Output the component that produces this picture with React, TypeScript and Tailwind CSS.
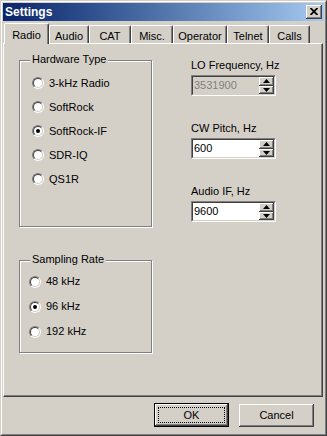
import { ReactNode } from 'react';

const FACE = 'bg-[#d4d0c8]';

const tabs = [
    { label: 'Radio', w: 'w-[45px]' },
    { label: 'Audio', w: 'w-[40px]' },
    { label: 'CAT', w: 'w-[42px]' },
    { label: 'Misc.', w: 'w-[42px]' },
    { label: 'Operator', w: 'w-[54px]' },
    { label: 'Telnet', w: 'w-[42px]' },
    { label: 'Calls', w: 'w-[41px]' },
];

const Radio = ({ checked }: { checked?: boolean }) => (
    <span className="flex h-[12px] w-[12px] shrink-0 rounded-full border border-t-[#808080] border-l-[#808080] border-r-white border-b-white">
        <span className="flex h-full w-full items-center justify-center rounded-full border border-t-[#404040] border-l-[#404040] border-r-[#d4d0c8] border-b-[#d4d0c8] bg-white">
            {checked && <span className="h-[4px] w-[4px] rounded-full bg-black" />}
        </span>
    </span>
);

const GroupBox = ({ title, className, children }: { title: string; className: string; children: ReactNode }) => (
    <div className={`relative border border-[#808080] shadow-[inset_1px_1px_0_white,1px_1px_0_white] ${className}`}>
        {/* caption sits over the etched line */}
        <span className={`absolute -top-[8px] left-[10px] px-[2px] leading-[13px] ${FACE}`}>{title}</span>
        {children}
    </div>
);

const Arrow = ({ up }: { up?: boolean }) => (
    <svg width="7" height="4" viewBox="0 0 7 4">
        {up ? <path d="M3.5 0 L7 4 L0 4 Z" fill="#000" /> : <path d="M0 0 L7 0 L3.5 4 Z" fill="#000" />}
    </svg>
);

const SpinHalf = ({ up }: { up?: boolean }) => (
    <div className={`flex flex-1 items-center justify-center ${FACE} shadow-[inset_-1px_-1px_0_#404040,inset_1px_1px_0_white,inset_-2px_-2px_0_#808080]`}>
        <Arrow up={up} />
    </div>
);

const SpinField = ({ label, value, disabled }: { label: string; value: string; disabled?: boolean }) => (
    <div className="flex flex-col">
        <span className="leading-[13px]">{label}</span>
        <div className="mt-[3px] flex h-[21px] w-[85px] border border-t-[#808080] border-l-[#808080] border-r-white border-b-white">
            <div className={`flex flex-1 border border-t-[#404040] border-l-[#404040] border-r-[#d4d0c8] border-b-[#d4d0c8] ${disabled ? FACE : 'bg-white'}`}>
                <span className={`flex-1 pl-[1px] leading-[17px] ${disabled ? 'text-[#808080]' : 'text-black'}`}>{value}</span>
                <div className="flex w-[15px] flex-col">
                    <SpinHalf up />
                    <SpinHalf />
                </div>
            </div>
        </div>
    </div>
);

export default function App() {
    return (
        <div
            className={`h-[436px] w-[327px] border border-t-[#d4d0c8] border-l-[#d4d0c8] border-r-[#404040] border-b-[#404040] ${FACE} text-[11px] text-black`}
            style={{ fontFamily: '"Liberation Sans", Arial, sans-serif' }}
        >
            <div className="flex h-full flex-col border border-t-white border-l-white border-r-[#808080] border-b-[#808080] p-[1px]">
                {/* Title bar */}
                <div className="flex h-[18px] items-center justify-between bg-gradient-to-r from-[#0a246a] to-[#a6caf0] pl-[2px] pr-[2px]">
                    <span className="text-[12px] font-bold text-white">Settings</span>
                    <div className={`flex h-[14px] w-[16px] items-center justify-center ${FACE} shadow-[inset_-1px_-1px_0_#404040,inset_1px_1px_0_white,inset_-2px_-2px_0_#808080]`}>
                        <svg width="8" height="7" viewBox="0 0 8 7" className="-mt-[1px]">
                            <path d="M0.5 0 L7.5 7 M7.5 0 L0.5 7" stroke="#000" strokeWidth="1.8" />
                        </svg>
                    </div>
                </div>

                {/* Tabs */}
                <div className="mt-[1px] flex h-[21px] items-end pl-[1px]">
                    {tabs.map((t, i) =>
                        i === 0 ? (
                            <div
                                key={t.label}
                                className={`relative z-10 -mb-[1px] flex h-[21px] ${t.w} items-start justify-center rounded-t-[2px] border-l border-t border-l-white border-t-white border-r border-r-[#404040] shadow-[inset_-1px_0_0_#808080] ${FACE} pt-[3px]`}
                            >
                                {t.label}
                            </div>
                        ) : (
                            <div
                                key={t.label}
                                className={`flex h-[18px] ${t.w} items-start justify-center rounded-t-[2px] border-l border-t border-l-white border-t-white border-r border-r-[#404040] shadow-[inset_-1px_0_0_#808080] pt-[2px]`}
                            >
                                {t.label}
                            </div>
                        )
                    )}
                </div>

                {/* Tab page */}
                <div className="flex h-[354px] w-[320px] border border-t-white border-l-white border-r-[#404040] border-b-[#404040] shadow-[inset_-1px_-1px_0_#808080]">
                    <div className="ml-[15px] mt-[16px] flex flex-col">
                        <GroupBox title="Hardware Type" className="h-[167px] w-[133px] pl-[12px] pt-[10px]">
                            {['3-kHz Radio', 'SoftRock', 'SoftRock-IF', 'SDR-IQ', 'QS1R'].map((r) => (
                                <div key={r} className="flex h-[24px] items-center gap-[5px]">
                                    <Radio checked={r === 'SoftRock-IF'} />
                                    <span>{r}</span>
                                </div>
                            ))}
                        </GroupBox>
                        <GroupBox title="Sampling Rate" className="mt-[33px] h-[93px] w-[133px] pl-[9px] pt-[8px]">
                            {['48 kHz', '96 kHz', '192 kHz'].map((r) => (
                                <div key={r} className="flex h-[25px] items-center gap-[5px]">
                                    <Radio checked={r === '96 kHz'} />
                                    <span>{r}</span>
                                </div>
                            ))}
                        </GroupBox>
                    </div>

                    <div className="ml-[39px] mt-[15px] flex flex-col gap-[26px]">
                        <SpinField label="LO Frequency, Hz" value="3531900" disabled />
                        <SpinField label="CW Pitch, Hz" value="600" />
                        <SpinField label="Audio IF, Hz" value="9600" />
                    </div>
                </div>

                {/* Buttons */}
                <div className="mt-[6px] flex justify-end gap-[10px] pr-[10px]">
                    <button className="flex h-[24px] w-[75px] border border-black bg-[#d4d0c8] p-0">
                        <div className="flex flex-1 p-[3px] shadow-[inset_-1px_-1px_0_#404040,inset_1px_1px_0_white,inset_-2px_-2px_0_#808080]">
                            <div className="flex flex-1 items-center justify-center border border-dotted border-black">OK</div>
                        </div>
                    </button>
                    <button className="mt-[1px] flex h-[23px] w-[75px] items-center justify-center bg-[#d4d0c8] shadow-[inset_-1px_-1px_0_#404040,inset_1px_1px_0_white,inset_-2px_-2px_0_#808080]">
                        Cancel
                    </button>
                </div>
            </div>
        </div>
    );
}
